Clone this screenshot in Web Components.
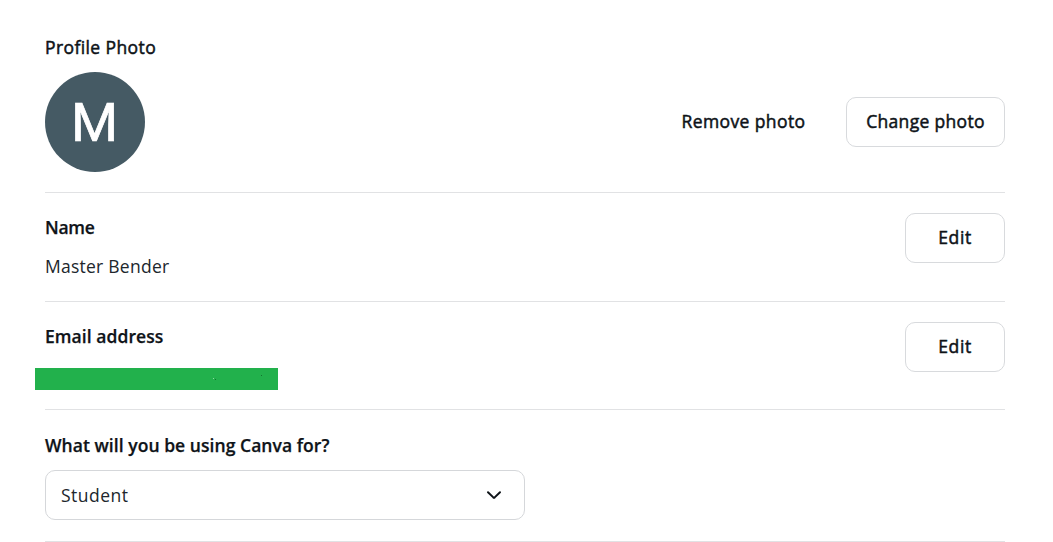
<!DOCTYPE html>
<html lang="en">
<head>
<meta charset="utf-8">
<title>Your account</title>
<style>
    body {
        margin: 0;
        background: #fff;
        color: #0e1318;
        font: 17.5px/24px "Open Sans", "Noto Sans", sans-serif;
    }
</style>
</head>
<body>
<account-settings>
    <setting-row label="Profile Photo" style="--row-height: 193px; --label-top: 35px; --label-gap: 1px; --label-spacing: 0.4px; --label-weight: 400; --label-stroke: 0.5px; --actions-top: 97px">
        <user-avatar>M</user-avatar>
        <plain-button slot="actions" variant="quiet" style="--width: 165px; --spacing: 0.4px">Remove photo</plain-button>
        <plain-button slot="actions" style="--width: 159px; --spacing: 0.32px">Change photo</plain-button>
    </setting-row>
    <setting-row label="Name" style="--row-height: 109px; --label-spacing: -0.3px">
        <text-value>Master Bender</text-value>
        <plain-button slot="actions" style="--width: 100px; --spacing: 0.6px">Edit</plain-button>
    </setting-row>
    <setting-row label="Email address" style="--row-height: 108px; --label-spacing: 0.07px">
        <redacted-value></redacted-value>
        <plain-button slot="actions" style="--width: 100px; --spacing: 0.6px">Edit</plain-button>
    </setting-row>
    <setting-row label="What will you be using Canva for?" style="--row-height: 132px; --label-top: 23px; --label-gap: 1px; --label-spacing: 0.05px">
        <select-box>Student</select-box>
    </setting-row>
</account-settings>

<script>
//attach an open shadow root filled with the markup
function render(host, html) {
    const template = document.createElement('template');
    template.innerHTML = html;
    host.attachShadow({ mode: 'open' }).appendChild(template.content.cloneNode(true));
}

class AccountSettings extends HTMLElement {
    constructor() {
        super();
        render(this, `
            <style>
                :host {
                    display: flex;
                    flex-direction: column;
                    box-sizing: border-box;
                    height: 542px;
                    padding: 0 48px 0 45px;
                    overflow: hidden;
                }
            </style>
            <slot></slot>
        `);
    }
}

class SettingRow extends HTMLElement {
    constructor() {
        super();
        render(this, `
            <style>
                :host {
                    display: flex;
                    flex: none;
                    justify-content: space-between;
                    align-items: flex-start;
                    box-sizing: border-box;
                    height: var(--row-height);
                    border-bottom: 1px solid #e1e2e4;
                }

                .content {
                    padding-top: var(--label-top, 22px);
                }

                .label {
                    padding-bottom: var(--label-gap, 0);
                    font-weight: var(--label-weight, 600);
                    letter-spacing: var(--label-spacing, 0);
                    -webkit-text-stroke: var(--label-stroke, 0.25px);
                    white-space: nowrap;
                }

                .actions {
                    display: flex;
                    padding-top: var(--actions-top, 20px);
                }
            </style>
            <div class="content">
                <div class="label"></div>
                <slot></slot>
            </div>
            <div class="actions"><slot name="actions"></slot></div>
        `);
        this.shadowRoot.querySelector('.label').textContent = this.getAttribute('label');
    }
}

class UserAvatar extends HTMLElement {
    constructor() {
        super();
        render(this, `
            <style>
                :host {
                    display: flex;
                    align-items: center;
                    justify-content: center;
                    box-sizing: border-box;
                    width: 100px;
                    height: 100px;
                    margin-top: 12px;
                    padding: 2px 1px 0 0;
                    border-radius: 50%;
                    background: #455a64;
                    color: #fff;
                    font: 400 54px/1 Roboto, sans-serif;
                    -webkit-text-stroke: 0.7px #fff;
                }
            </style>
            <slot></slot>
        `);
    }
}

class TextValue extends HTMLElement {
    constructor() {
        super();
        render(this, `
            <style>
                :host {
                    display: block;
                    margin-top: 15px;
                    color: #20262c;
                    letter-spacing: 0.25px;
                }
            </style>
            <slot></slot>
        `);
    }
}

class RedactedValue extends HTMLElement {
    constructor() {
        super();
        render(this, `
            <style>
                :host {
                    display: block;
                    width: 243px;
                    height: 22px;
                    margin: 20px 0 0 -10px;
                    background: #22b14c;
                }

                svg {
                    display: block;
                }
            </style>
            <svg width="243" height="22" viewBox="0 0 243 22">
                <path d="M178 10h1v1h-1z" fill="#8edba3"/>
                <path d="M180 11h1v1h-1zM226 7h1v1h-1z" fill="#14732f"/>
            </svg>
        `);
    }
}

class PlainButton extends HTMLElement {
    constructor() {
        super();
        render(this, `
            <style>
                :host {
                    display: block;
                }

                button {
                    display: block;
                    box-sizing: border-box;
                    width: var(--width);
                    height: 50px;
                    padding: 0 0 2px;
                    border: 1px solid #d8dadd;
                    border-radius: 10px;
                    background: #fff;
                    color: inherit;
                    font: inherit;
                    letter-spacing: var(--spacing, 0);
                    -webkit-text-stroke: 0.5px;
                    white-space: nowrap;
                }

                :host([variant="quiet"]) button {
                    border-color: transparent;
                    margin-right: 20px;
                }
            </style>
            <button type="button"><slot></slot></button>
        `);
    }
}

class SelectBox extends HTMLElement {
    constructor() {
        super();
        render(this, `
            <style>
                :host {
                    display: flex;
                    align-items: center;
                    justify-content: space-between;
                    box-sizing: border-box;
                    width: 480px;
                    height: 50px;
                    margin-top: 12px;
                    padding: 0 22px 0 15px;
                    border: 1px solid #d5d7da;
                    border-radius: 10px;
                    color: #20262c;
                    letter-spacing: 0.5px;
                }
            </style>
            <slot></slot>
            <svg width="16" height="16" viewBox="0 0 16 16" fill="none" stroke="#0e1318" stroke-width="2" stroke-linecap="round" stroke-linejoin="round">
                <path d="M2 5.3 7.3 10.4Q8 11 8.7 10.4L14 5.3"/>
            </svg>
        `);
    }
}

window.customElements.define('account-settings', AccountSettings);
window.customElements.define('setting-row', SettingRow);
window.customElements.define('user-avatar', UserAvatar);
window.customElements.define('text-value', TextValue);
window.customElements.define('redacted-value', RedactedValue);
window.customElements.define('plain-button', PlainButton);
window.customElements.define('select-box', SelectBox);
</script>
</body>
</html>
